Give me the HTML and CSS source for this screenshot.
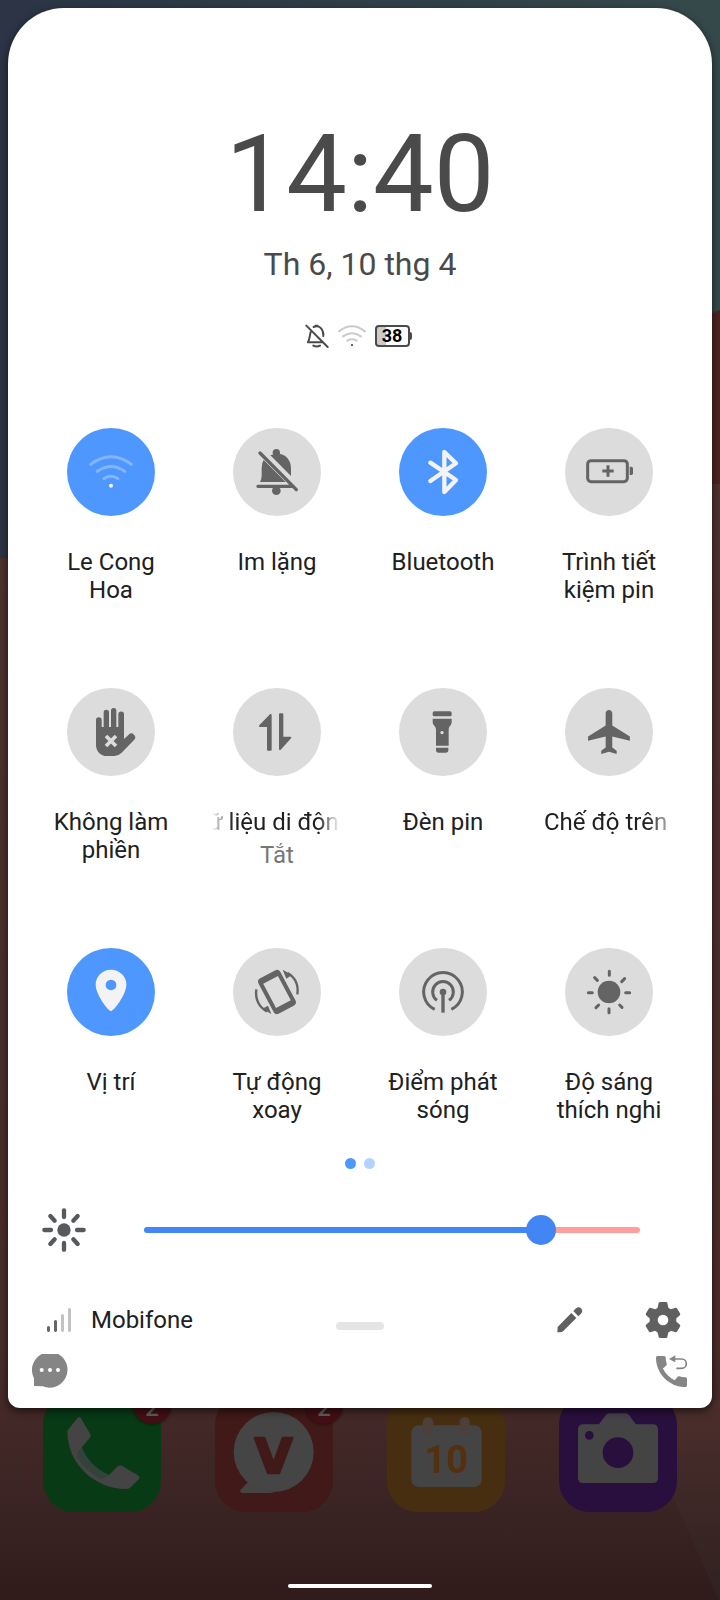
FILE: index.html
```
<!DOCTYPE html>
<html lang="vi">
<head>
<meta charset="utf-8">
<meta name="viewport" content="width=device-width, initial-scale=1">
<title>Cài đặt nhanh</title>
<link rel="stylesheet" href="styles.css">
</head>
<body>
<div class="screen">
  <svg class="wallpaper" viewBox="0 0 720 1600" preserveAspectRatio="none" aria-hidden="true">
    <defs>
      <linearGradient id="sky" x1="0" x2="1"><stop offset="0" stop-color="#2c3445"/><stop offset="1" stop-color="#35494b"/></linearGradient>
      <linearGradient id="ground" x1="0" x2="0" y1="0" y2="1"><stop offset="0" stop-color="#4e3330"/><stop offset=".8" stop-color="#4a2c2a"/><stop offset=".93" stop-color="#3a2423"/><stop offset="1" stop-color="#301b1b"/></linearGradient>
      <linearGradient id="fold" x1="0" x2="0" y1="0" y2="1"><stop offset="0" stop-color="#4c2e2c"/><stop offset="1" stop-color="#2f2220"/></linearGradient>
    </defs>
    <rect width="720" height="1600" fill="url(#sky)"/>
    <path d="M0 558H360V400L720 310V1600H0Z" fill="url(#ground)"/>
    <path d="M700 320L720 310V484H700Z" fill="#4a2422"/>
    <path d="M630 1400H720V1600H719Z" fill="url(#fold)"/>
  </svg>

  <main class="panel">
    <header class="header">
      <time class="clock">14:40</time>
      <p class="date">Th 6, 10 thg 4</p>
      <div class="status">
        <svg class="line mute" width="24" height="24" viewBox="0 0 72 72" aria-hidden="true">
          <path d="M4 5L68 69M17 24C14 34 15 44 9 55H50M26 9C42 2 56 14 55 36M25 65Q35 70 45 65M31 5H38"/>
        </svg>
        <svg class="line wifi" width="30" height="24" viewBox="0 0 90 72" aria-hidden="true">
          <path d="M6 22Q45 -8 84 22M18 37Q45 18 72 37M31 50Q45 42 59 50"/><path class="wifi-dot" d="M45 63V63.100"/>
        </svg>
        <span class="battery">38</span>
      </div>
    </header>

    <section class="tiles">
      <div class="tile">
        <button class="toggle on" aria-labelledby="t1"><svg viewBox="0 0 264 264"><path d="M71 109Q132 64 193 109M91 130Q132 101 173 130M111 152Q132 138 153 152" fill="none" stroke="#84b5ff" stroke-width="9" stroke-linecap="round"/><circle cx="132" cy="173" r="6"/></svg></button>
        <span class="label" id="t1">Le Cong Hoa</span>
      </div>
      <div class="tile">
        <button class="toggle" aria-labelledby="t2"><svg viewBox="0 0 264 264"><circle cx="130" cy="74" r="11"/><path d="M112 82C145 67 174 88 174 120V144ZM92 96L158 162H81Q86 154 86 142V120Q86 104 92 96Z"/><circle cx="130" cy="188" r="13"/><path d="M81 75L190 185M75 175H181" fill="none" stroke="currentColor" stroke-width="10" stroke-linecap="round"/></svg></button>
        <span class="label" id="t2">Im lặng</span>
      </div>
      <div class="tile">
        <button class="toggle on" aria-labelledby="t3"><svg viewBox="0 0 264 264"><path d="M94 104L171 156L136 192V72L171 106L94 159" fill="none" stroke="currentColor" stroke-width="13" stroke-linecap="round" stroke-linejoin="round"/></svg></button>
        <span class="label" id="t3">Bluetooth</span>
      </div>
      <div class="tile">
        <button class="toggle" aria-labelledby="t4"><svg viewBox="0 0 264 264"><path d="M129 112V146M112 129H146" stroke="currentColor" stroke-width="9"/><rect x="68" y="98" width="119" height="63" rx="10" fill="none" stroke="currentColor" stroke-width="9"/><path d="M194 116H199Q204 116 204 121V136Q204 141 199 141H194Z"/></svg></button>
        <span class="label" id="t4">Trình tiết kiệm pin</span>
      </div>

      <div class="tile">
        <button class="toggle" aria-labelledby="t5"><svg viewBox="0 0 264 264"><path d="M87 96a8 8 0 0 1 17 0V117H110V73a8 8 0 0 1 16 0V117H132V68a8 8 0 0 1 16 0V117H154V79a8 8 0 0 1 17 0V153L185 140A11 11 0 0 1 201 156L164 194Q154 204 142 204H119A32 32 0 0 1 87 172Z"/><path d="M117 144L147 174M147 144L117 174" stroke="#dcdcdc" stroke-width="11"/></svg></button>
        <span class="label" id="t5">Không làm phiền</span>
      </div>
      <div class="tile">
        <button class="toggle" aria-labelledby="t6"><svg viewBox="0 0 264 264" stroke="currentColor" stroke-width="6" stroke-linejoin="round"><path d="M105 114H81L113 81V185H105ZM148 149H172L141 183V79H148Z"/></svg></button>
        <span class="label marquee scrolled" id="t6">Dữ liệu di động</span>
        <span class="state">Tắt</span>
      </div>
      <div class="tile">
        <button class="toggle" aria-labelledby="t7"><svg viewBox="0 0 264 264"><rect x="101" y="70" width="57" height="15" rx="5"/><path fill-rule="evenodd" d="M101 92H158V101C158 113 149 113 149 126V173H111V126C111 113 101 113 101 101ZM129 129a5 5 0 1 0 .1 0Z"/><path d="M111 179H148V187Q148 194 141 194H118Q111 194 111 187Z"/></svg></button>
        <span class="label" id="t7">Đèn pin</span>
      </div>
      <div class="tile">
        <button class="toggle" aria-labelledby="t8"><svg viewBox="0 0 264 264"><path transform="translate(56 53) scale(6.6)" d="M21 16v-2l-8-5V3.500c0-.83-.67-1.500-1.500-1.500S10 2.670 10 3.500V9l-8 5v2l8-2V19l-2 1.500V22l3.500-1 3.500 1v-1.500L13 19v-5l8 2z"/></svg></button>
        <span class="label marquee" id="t8">Chế độ trên máy bay</span>
      </div>

      <div class="tile">
        <button class="toggle on" aria-labelledby="t9"><svg viewBox="0 0 264 264"><path fill-rule="evenodd" d="M132 189C124 189 86 140 86 110A46 45 0 0 1 178 110C178 140 140 189 132 189ZM132 95a16 16 0 1 0 .1 0Z"/></svg></button>
        <span class="label" id="t9">Vị trí</span>
      </div>
      <div class="tile">
        <button class="toggle" aria-labelledby="t10"><svg viewBox="0 0 264 264"><path fill-rule="evenodd" transform="rotate(-28 132 132)" d="M107 72H157Q169 72 169 84V180Q169 192 157 192H107Q95 192 95 180V84Q95 72 107 72ZM107 91V173H157V91Z"/><path d="M149 65L177 81L160 92ZM115 198L88 182L105 173Z"/><path d="M164 75C187 89 197 112 193 139M70 124C66 153 78 178 102 190" fill="none" stroke="currentColor" stroke-width="7"/></svg></button>
        <span class="label" id="t10">Tự động xoay</span>
      </div>
      <div class="tile">
        <button class="toggle" aria-labelledby="t11"><svg viewBox="0 0 264 264"><circle cx="132" cy="132" r="10"/><path d="M132 132V194" stroke="currentColor" stroke-width="10"/><path d="M107 184A58 58 0 1 1 157 184M114 157A31 31 0 1 1 150 157" fill="none" stroke="currentColor" stroke-width="9"/></svg></button>
        <span class="label" id="t11">Điểm phát sóng</span>
      </div>
      <div class="tile">
        <button class="toggle" aria-labelledby="t12"><svg viewBox="0 0 264 264"><circle cx="132" cy="132" r="34"/><path d="M133 70V82M132 182V194M70 134H82M182 134H194M89 89L97 97M179 92L170 101M93 179L101 171M164 171L171 178" stroke="currentColor" stroke-width="9" stroke-linecap="round"/></svg></button>
        <span class="label" id="t12">Độ sáng thích nghi</span>
      </div>
    </section>

    <div class="pages"><span class="dot current"></span><span class="dot"></span></div>

    <div class="brightness">
      <svg width="44" height="44" viewBox="0 0 132 132" aria-hidden="true"><g stroke="#555a5f" stroke-width="13" stroke-linecap="round"><path d="M66 7V27M66 105V125M7 66H27M105 66H125M25 24L38 38M107 24L94 38M25 108L38 94M107 108L94 94"/></g><circle cx="66" cy="66" r="20" fill="#555a5f"/></svg>
      <input class="slider" type="range" min="0" max="100" value="82" aria-label="Độ sáng">
    </div>

    <footer class="footer">
      <div class="carrier">
        <svg width="24" height="24" viewBox="0 0 24 24" aria-hidden="true"><path d="M0 19q1.500-2 3 0v4q-1.500 2-3 0zM7 13q1.500-2 3 0v10q-1.500 2-3 0z" fill="#666"/><path d="M14 7q1.500-2 3 0v16q-1.500 2-3 0zM21 1q1.500-2 3 0v22q-1.500 2-3 0z" fill="#c2c2c2"/></svg>
        <span>Mobifone</span>
      </div>
      <span class="handle"></span>
      <div class="actions">
        <button class="action" aria-label="Chỉnh sửa"><svg width="26" height="26" viewBox="0 0 78 78"><path d="M1 76L2 60L43 18L58 33L19 72Q15 76 9 76ZM49 12L57 4Q66 -3 73 5Q79 13 72 20L64 28Z"/></svg></button>
        <button class="action" aria-label="Cài đặt"><svg width="36" height="36" viewBox="0 0 108 108"><defs><mask id="hole"><rect width="108" height="108" fill="#fff"/><circle cx="54" cy="54" r="16" fill="#000"/></mask><path id="tooth" d="M37 22L41 3Q42 0 45 0H63Q66 0 67 3L71 22L76 54H32Z"/></defs><g mask="url(#hole)"><circle cx="54" cy="54" r="40"/><use href="#tooth"/><use href="#tooth" transform="rotate(60 54 54)"/><use href="#tooth" transform="rotate(120 54 54)"/><use href="#tooth" transform="rotate(180 54 54)"/><use href="#tooth" transform="rotate(240 54 54)"/><use href="#tooth" transform="rotate(300 54 54)"/></g></svg></button>
      </div>
    </footer>

    <div class="shortcuts">
      <button class="shortcut" aria-label="Tin nhắn"><svg width="36" height="34" viewBox="0 0 108 102"><path d="M29 0H79A54 54 0 0 1 32 97L6 96V73A54 54 0 0 1 29 0Z"/><g fill="#fff"><circle cx="29" cy="48" r="6"/><circle cx="54" cy="48" r="6"/><circle cx="78" cy="48" r="6"/></g></svg></button>
      <button class="shortcut" aria-label="Gọi lại"><svg width="32" height="32" viewBox="0 0 96 96"><path transform="translate(-15.500 -12.500) scale(5.170)" d="M20.010 15.380c-1.230 0-2.420-.2-3.530-.56-.35-.12-.74-.03-1.010.24l-1.570 1.970c-2.830-1.350-5.480-3.900-6.890-6.830l1.950-1.660c.27-.28.35-.67.24-1.020-.37-1.110-.56-2.300-.56-3.530 0-.54-.45-.99-.99-.99H4.190C3.650 3 3 3.240 3 3.990 3 13.280 10.730 21 20.010 21c.71 0 .99-.63.99-1.180v-3.450c0-.54-.45-.99-.99-.99z"/><path d="M39 12L58 1V22Z"/><path d="M56 12H77A14 14 0 0 1 77 40H61" fill="none" stroke="currentColor" stroke-width="5"/></svg></button>
    </div>
  </main>

  <nav class="dock">
    <a class="app" href="#" aria-label="Điện thoại"><svg viewBox="0 0 354 354"><rect width="354" height="354" rx="92" fill="#083a16"/><path fill="#454445" d="M73 110L104 71Q108 67 113 71L142 121Q145 127 140 132L116 160C130 195 155 225 198 243L224 217Q231 212 238 216L287 245Q292 251 287 256L264 279Q258 285 250 285C160 285 73 215 73 110Z"/><path fill="#33423a" d="M116 160C130 195 155 225 198 243Q185 255 172 254C145 240 118 215 102 190Q103 172 116 160Z"/></svg><span class="badge">2</span></a>
    <a class="app" href="#" aria-label="V"><svg viewBox="0 0 354 354"><rect width="354" height="354" rx="92" fill="#401918"/><circle cx="176" cy="174" r="120" fill="#464545"/><path d="M98 265L77 287Q72 296 82 297H178Z" fill="#464343"/><text class="logo-letter" x="176" y="237" text-anchor="middle">V</text></svg><span class="badge">2</span></a>
    <a class="app" href="#" aria-label="Lịch"><svg viewBox="0 0 354 354"><rect width="354" height="354" rx="92" fill="#472e10"/><rect x="73" y="94" width="211" height="185" rx="22" fill="#454444"/><rect x="107" y="69" width="32" height="55" rx="16" fill="#4b403a"/><rect x="218" y="69" width="30" height="55" rx="15" fill="#4b403a"/><text class="day" x="178" y="237" text-anchor="middle">10</text></svg></a>
    <a class="app" href="#" aria-label="Máy ảnh"><svg viewBox="0 0 354 354"><rect width="354" height="354" rx="92" fill="#290f3d"/><path d="M118 93L140 64Q144 58 152 58H200Q206 58 210 63L232 93Z" fill="#454249"/><rect x="57" y="91" width="240" height="176" rx="14" fill="#454444"/><circle cx="177" cy="176" r="46" fill="#290f3d"/><circle cx="91" cy="124" r="13" fill="#290f3d"/></svg></a>
  </nav>
  <div class="home-bar"></div>
</div>
</body>
</html>
```

FILE: styles.css
```
* { box-sizing: border-box; }

body {
  margin: 0;
  font-family: Roboto, "Noto Sans", sans-serif;
  font-size: 24px;
  line-height: 28px;
  color: #202020;
  background: #301b1b;
}

button {
  padding: 0;
  border: 0;
  background: none;
  font: inherit;
  cursor: pointer;
}

svg { display: block; fill: currentColor; }

.screen {
  position: relative;
  z-index: 0;
  display: flex;
  flex-direction: column;
  min-height: 100vh;
  padding: 8px 0 12px;
}

.wallpaper {
  position: absolute;
  inset: 0;
  z-index: -1;
  width: 100%;
  height: 100%;
}

.panel {
  position: relative;
  z-index: 1;
  margin: 0 8px;
  padding: 102px 20px 20px;
  border-radius: 56px 56px 12px 12px;
  background: #fff;
  box-shadow: 0 3px 8px rgba(0, 0, 0, 0.6);
}

.header {
  display: flex;
  flex-direction: column;
  align-items: center;
  color: #4a4a4a;
}

.clock { font-size: 108px; line-height: 128px; }

.date {
  margin: 6px 0 40px;
  font-size: 32px;
  line-height: 40px;
}

.status {
  display: flex;
  align-items: center;
  gap: 8px;
  padding-right: 4px;
}

.line {
  fill: none;
  stroke-width: 6px;
  stroke-linecap: round;
  stroke-linejoin: round;
}

.mute { stroke: #4a4a4a; }

.wifi { stroke: #cbcbcb; }

.wifi-dot { stroke: #333; }

.battery {
  position: relative;
  width: 35px;
  height: 22px;
  margin-right: 2px;
  border: 2px solid #4a4a4a;
  border-radius: 4px;
  background: linear-gradient(90deg, #ccc 30%, #fff 30%);
  color: #000;
  font-size: 18px;
  font-weight: 700;
  line-height: 18px;
  text-align: center;
}

.battery::after {
  content: "";
  position: absolute;
  top: 5px;
  right: -4px;
  width: 2px;
  height: 8px;
  border-radius: 0 2px 2px 0;
  background: #4a4a4a;
}

.tiles {
  display: grid;
  grid-template-columns: repeat(4, 1fr);
  row-gap: 79px;
  margin-top: 80px;
}

.tile {
  display: flex;
  flex-direction: column;
  align-items: center;
  min-height: 181px;
}

.toggle {
  width: 88px;
  height: 88px;
  margin-bottom: 32px;
  border-radius: 50%;
  background: #dcdcdc;
  color: #646464;
}

.toggle.on { background: #4d97ff; color: #f3f3f3; }

.label { width: 130px; text-align: center; }

.marquee {
  overflow: hidden;
  white-space: nowrap;
  text-align: left;
  mask-image: linear-gradient(90deg, #000 80%, transparent 104%);
}

.scrolled {
  text-indent: -20px;
  mask-image: linear-gradient(90deg, transparent, #000 16%, #000 82%, transparent 98%);
}

.state { margin-top: 5px; color: #777; }

.pages {
  display: flex;
  justify-content: center;
  gap: 8px;
  margin-top: 29px;
}

.dot {
  width: 11px;
  height: 11px;
  border-radius: 50%;
  background: #b3d3ff;
}

.dot.current { background: #4d97ff; }

.brightness {
  display: flex;
  align-items: center;
  gap: 58px;
  margin: 39px 52px 0 14px;
}

.slider {
  flex: 1;
  min-width: 0;
  height: 30px;
  margin: 0;
  appearance: none;
  background: none;
}

.slider::-webkit-slider-runnable-track {
  height: 6px;
  border-radius: 3px;
  background: linear-gradient(90deg, #4285f4 80%, #ff9e9e 80%);
}

.slider::-webkit-slider-thumb {
  appearance: none;
  width: 30px;
  height: 30px;
  margin-top: -12px;
  border-radius: 50%;
  background: #4285f4;
}

.footer {
  display: grid;
  grid-template-columns: 1fr auto 1fr;
  align-items: center;
  margin: 50px 11px 0;
}

.carrier {
  display: flex;
  align-items: center;
  gap: 20px;
  padding-left: 8px;
}

.handle {
  width: 48px;
  height: 8px;
  margin-top: 12px;
  border-radius: 4px;
  background: #e4e4e4;
}

.actions {
  display: flex;
  justify-content: flex-end;
  align-items: center;
  gap: 62px;
}

.action { color: #606060; }

.shortcuts {
  display: flex;
  justify-content: space-between;
  margin: 16px 4px 0;
}

.shortcut { color: #858585; }

.dock {
  display: flex;
  justify-content: space-between;
  margin-top: -14px;
  padding: 0 43px;
}

.app {
  position: relative;
  width: 118px;
  color: #555;
  text-decoration: none;
}

.badge {
  position: absolute;
  top: -8px;
  right: -10px;
  width: 38px;
  height: 38px;
  border-radius: 50%;
  background: #430f14;
  box-shadow: 0 1px 3px rgba(0, 0, 0, 0.4);
  color: #606060;
  font-weight: 500;
  line-height: 44px;
  text-align: center;
}

.logo-letter {
  font: 700 146px "DejaVu Sans", sans-serif;
  fill: #401918;
  stroke: #401918;
  stroke-width: 8px;
  stroke-linejoin: round;
}

.day { font-size: 114px; font-weight: 700; fill: #54300f; }

.home-bar {
  width: 144px;
  height: 4px;
  margin: auto auto 0;
  border-radius: 2px;
  background: #fff;
}
```
